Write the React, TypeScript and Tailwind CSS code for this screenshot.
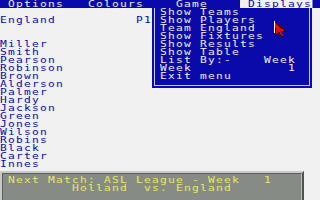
const BLUE = 'text-[#0a0aaa]';

const NAMES = [
  'Miller', 'Smith', 'Pearson', 'Robinson', 'Brown', 'Alderson', 'Palmer', 'Hardy',
  'Jackson', 'Green', 'Jones', 'Wilson', 'Robins', 'Black', 'Carter', 'Innes',
];

const MENU = [
  'Show Teams',
  'Show Players',
  'Team England',
  'Show Fixtures',
  'Show Results',
  'Show Table',
  'List By:-    Week',
  'Week            1',
  'Exit menu',
];

// 9px DejaVu Sans Mono + 0.98px tracking = 6.4px per cell, stretched 1.25x to the 8px grid
function Row({ text = '', className = '' }: { text?: string; className?: string }) {
  return <div className={`h-[8px] origin-left scale-x-125 whitespace-pre leading-[8px] ${className}`}>{text}</div>;
}

function Pointer() {
  return (
    <svg className="absolute left-[273px] top-[20px]" width="16" height="18" viewBox="0 0 16 18" shapeRendering="crispEdges">
      <polygon points="1,1 12,11 8,11 11,16 9,17 6,12 3,15" fill="#e01010" stroke="#4a0000" strokeWidth="1" />
      <polyline points="1,1 2,13" stroke="#ffffff" strokeWidth="1" fill="none" />
    </svg>
  );
}

export default function App() {
  return (
    <div
      className="relative h-[200px] w-[320px] overflow-hidden bg-[#f0f0f0] text-[9px] tracking-[0.98px]"
      style={{ fontFamily: '"DejaVu Sans Mono", "Liberation Mono", monospace' }}
    >
      {/* menu bar */}
      <div className="h-[8px] bg-[#0a0aaa] text-[#f0f0f0]">
        <div className="flex h-[8px] origin-left scale-x-125 leading-[8px]">
          <span className="whitespace-pre">{' Options   Colours    Game    '}</span>
          <span className={`whitespace-pre bg-[#f0f0f0] ${BLUE}`}>{' Displays'}</span>
        </div>
      </div>

      <div className={`flex flex-col ${BLUE}`}>
        <Row />
        <Row text="England          P1" />
        <Row />
        <Row />
        {NAMES.map((n) => (
          <Row key={n} text={n} />
        ))}
      </div>

      {/* info panel */}
      <div className="mt-[3px] w-[304px] border-2 border-t-[#c8c8c8] border-l-[#c8c8c8] border-r-[#505450] border-b-[#505450]">
        <div className="h-[40px] border border-t-[#5a5e5a] border-l-[#5a5e5a] border-r-[#b8bcb8] border-b-[#b8bcb8] bg-[#868b86] pl-[5px] pt-[2px] text-[#e8e860]">
          <Row text="Next Match: ASL League - Week   1" />
          <Row text="        Holland  vs. England" />
        </div>
      </div>

      {/* dropdown */}
      <div className="absolute left-[152px] top-[8px] h-[80px] w-[160px] bg-[#0a0aaa] text-[#f0f0f0]">
        <div className="absolute bottom-[2px] left-[2px] right-[2px] top-0 border-x border-b border-[#c8c8e0]" />
        <div className="relative flex flex-col pl-[8px]">
          {MENU.map((m) => (
            <Row key={m} text={m} />
          ))}
        </div>
      </div>

      <Pointer />
    </div>
  );
}
